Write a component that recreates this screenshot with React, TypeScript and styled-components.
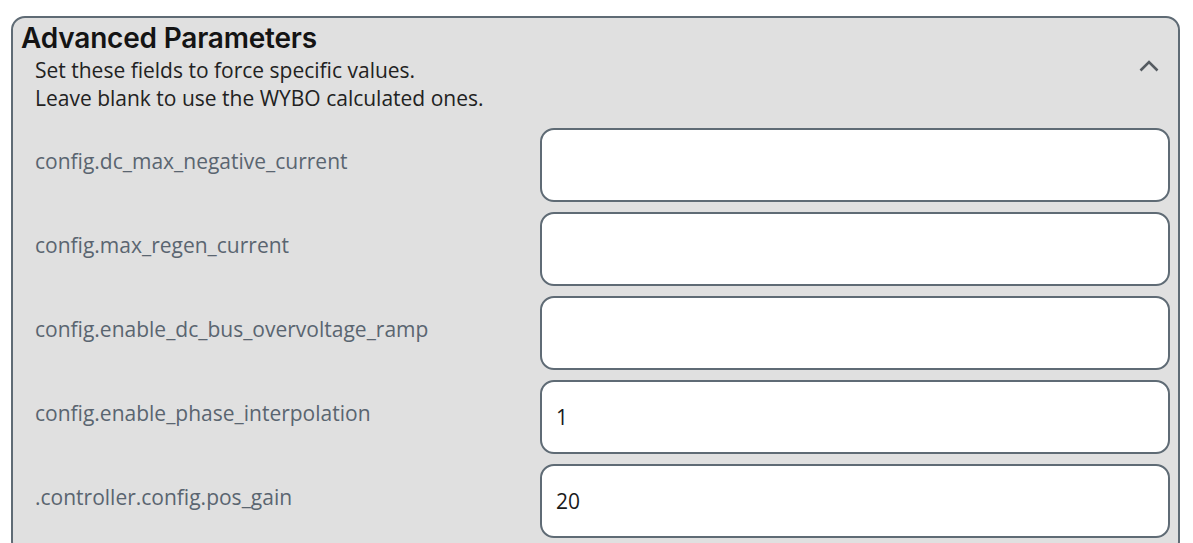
import styled, { createGlobalStyle } from "styled-components";

const GlobalStyle = createGlobalStyle`
    body {
        margin: 0;
        background: #ffffff;
        font-family: "Open Sans", "Noto Sans", sans-serif;
        overflow: hidden;
    }
`;

const Panel = styled.section`
    box-sizing: border-box;
    width: 1169px;
    margin: 16px 0 0 11px;
    padding: 2px 8px 16px 8px;
    background: #e0e0e0;
    border: 2px solid #5f6b75;
    border-radius: 14px;
`;

const Header = styled.div`
    display: flex;
    align-items: center;
    justify-content: space-between;
`;

const Title = styled.h2`
    margin: 0;
    font-family: "Inter", sans-serif;
    font-weight: 600;
    font-size: 28px;
    line-height: 36px;
    letter-spacing: -0.2px;
    color: #141414;
`;

const Description = styled.p`
    margin: 0 0 0 14px;
    font-size: 21px;
    line-height: 28px;
    color: #222222;
`;

const Toggle = styled.button`
    display: flex;
    align-items: center;
    justify-content: center;
    margin-right: 11px;
    padding: 0;
    border: none;
    background: transparent;
    cursor: pointer;
`;

const Fields = styled.div`
    display: flex;
    flex-direction: column;
    gap: 10px;
    margin-top: 16px;
`;

const Row = styled.div`
    display: grid;
    grid-template-columns: 519px 630px;
`;

const Label = styled.label`
    padding: 19px 0 0 14px;
    font-size: 21px;
    line-height: 28px;
    color: #5a6570;
`;

const Input = styled.input`
    box-sizing: border-box;
    width: 630px;
    height: 74px;
    padding: 0 14px;
    font-family: "Open Sans", sans-serif;
    font-size: 21px;
    color: #1a1a1a;
    background: #ffffff;
    border: 2px solid #5f6b75;
    border-radius: 14px;
    outline: none;
`;

const fields = [
    { name: "config.dc_max_negative_current", value: "" },
    { name: "config.max_regen_current", value: "" },
    { name: "config.enable_dc_bus_overvoltage_ramp", value: "" },
    { name: "config.enable_phase_interpolation", value: "1" },
    { name: ".controller.config.pos_gain", value: "20" },
];

const App = () => {
    return (
        <>
            <GlobalStyle />
            <Panel>
                <Header>
                    <div>
                        <Title>Advanced Parameters</Title>
                        <Description>
                            Set these fields to force specific values.
                            <br />
                            Leave blank to use the WYBO calculated ones.
                        </Description>
                    </div>
                    <Toggle aria-label="collapse">
                        <svg width="20" height="12" viewBox="0 0 20 12">
                            <polyline
                                points="1.5,10.5 10,2 18.5,10.5"
                                fill="none"
                                stroke="#555b61"
                                strokeWidth="2.6"
                            />
                        </svg>
                    </Toggle>
                </Header>
                <Fields>
                    {fields.map(f => (
                        <Row key={f.name}>
                            <Label>{f.name}</Label>
                            <Input defaultValue={f.value} />
                        </Row>
                    ))}
                </Fields>
            </Panel>
        </>
    );
};

export default App;
